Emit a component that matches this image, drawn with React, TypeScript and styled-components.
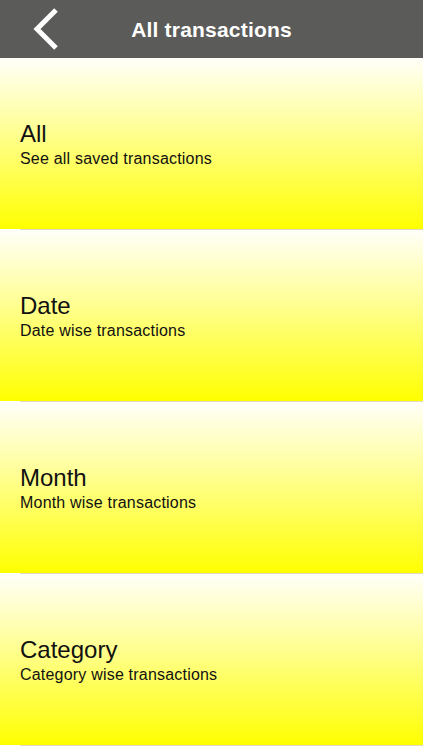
import { FC } from 'react'
import styled, { createGlobalStyle } from 'styled-components'

const GlobalStyle = createGlobalStyle`
  html, body {
    margin: 0;
    padding: 0;
    background: #fffffb;
  }
  body {
    font-family: 'Liberation Sans', Arial, sans-serif;
  }
`

const Screen = styled.div`
  width: 423px;
  height: 750px;
  display: flex;
  flex-direction: column;
  overflow: hidden;
  background: #fffffb;
`

const NavBar = styled.header`
  height: 58px;
  flex-shrink: 0;
  display: grid;
  grid-template-columns: 80px 1fr 80px;
  align-items: center;
  background: #5b5b59;
`

const BackButton = styled.button`
  border: none;
  background: none;
  padding: 0 0 0 32px;
  height: 58px;
  display: flex;
  align-items: center;
  cursor: pointer;
`

const Title = styled.h1`
  margin: 0;
  text-align: center;
  color: #ffffff;
  font-size: 21px;
  font-weight: bold;
  letter-spacing: 0.2px;
  padding-top: 1px;
`

const List = styled.div`
  display: flex;
  flex-direction: column;
`

const Row = styled.div`
  height: 171px;
  display: flex;
  flex-direction: column;
  justify-content: center;
  padding-left: 20px;
  background: linear-gradient(to bottom, #fffffa 0%, #ffff9a 40%, #ffff00 100%);
  cursor: pointer;
`

const Separator = styled.div`
  height: 1px;
  margin-left: 20px;
  background: #dcdcc4;
`

const RowTitle = styled.div`
  font-size: 24px;
  line-height: 30px;
  color: #111;
`

const RowSubtitle = styled.div`
  font-size: 16px;
  line-height: 19px;
  color: #111;
  letter-spacing: 0.2px;
`

const items = [
  { title: 'All', subtitle: 'See all saved transactions' },
  { title: 'Date', subtitle: 'Date wise transactions' },
  { title: 'Month', subtitle: 'Month wise transactions' },
  { title: 'Category', subtitle: 'Category wise transactions' },
]

const App: FC = () => {
  return (
    <Screen>
      <GlobalStyle />
      <NavBar>
        <BackButton aria-label="Back">
          <svg width="28" height="44" viewBox="0 0 28 44">
            <path
              d="M24 3 L5 22 L24 41"
              fill="none"
              stroke="#ffffff"
              strokeWidth="5"
              strokeLinecap="butt"
              strokeLinejoin="miter"
            />
          </svg>
        </BackButton>
        <Title>All transactions</Title>
        <div />
      </NavBar>
      <List>
        {items.map(item => (
          <div key={item.title}>
            <Row>
              <RowTitle>{item.title}</RowTitle>
              <RowSubtitle>{item.subtitle}</RowSubtitle>
            </Row>
            <Separator />
          </div>
        ))}
      </List>
    </Screen>
  )
}

export default App
